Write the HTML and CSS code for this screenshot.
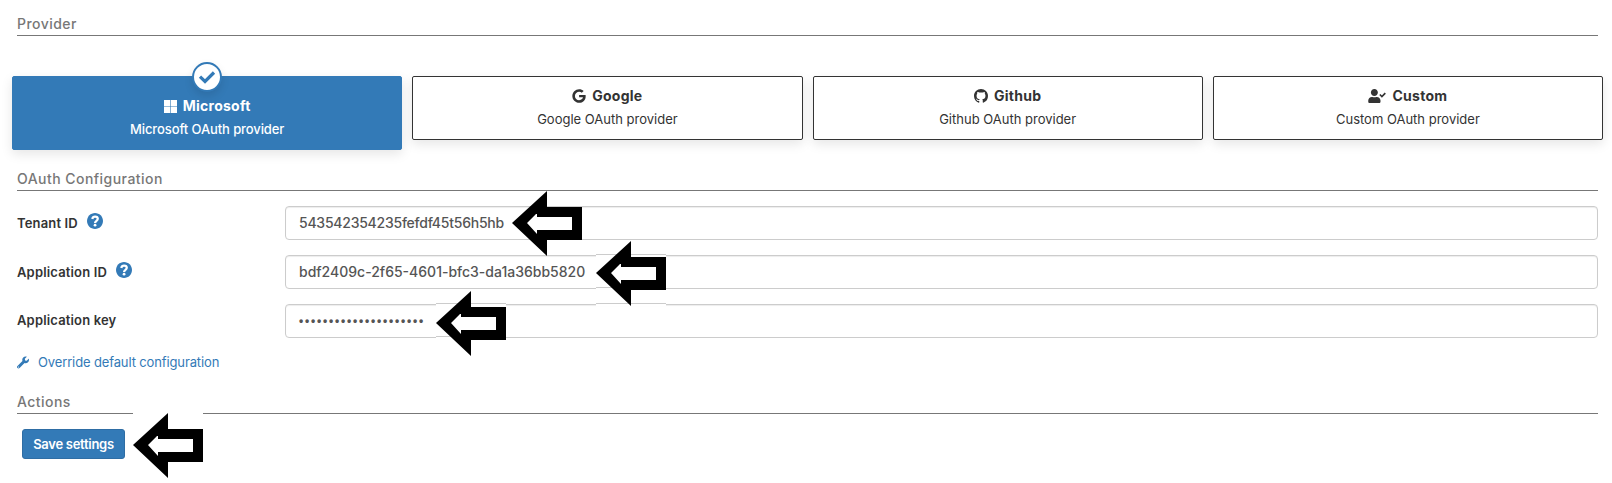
FILE: index.html
```html
<!DOCTYPE html>
<html lang="en">
<head>
<meta charset="utf-8">
<title>OAuth settings</title>
<link rel="stylesheet" href="styles.css">
</head>
<body>
<svg class="defs" width="0" height="0">
  <symbol id="help" viewBox="8 8 496 496"><path fill="currentColor" d="M504 256c0 137-111 248-248 248S8 393 8 256 119 8 256 8s248 111 248 248z"/><path fill="none" stroke="#fff" stroke-width="70" d="M172 192c10-48 42-72 86-72 50 0 84 30 84 70 0 62-84 58-84 126"/><circle cx="258" cy="386" r="43" fill="#fff"/></symbol>
  <symbol id="arrow" viewBox="0 0 70 65"><path fill="#000" d="M0 32 35 0V16H70V49H35V65Z"/><path fill="#fff" d="M15 32 24 23H25V26H60V39H25V43Z"/></symbol>
</svg>
<main class="page">
  <h2 class="section">Provider</h2>
  <div class="providers">
    <div class="card selected">
      <span class="check"><svg width="18" height="18" viewBox="0 0 18 18"><path d="M2 8.700 7 13.500 16 4.500" fill="none" stroke="currentColor" stroke-width="3.200"/></svg></span>
      <div class="title"><svg width="13" height="13" viewBox="0 0 13 13"><path fill="currentColor" d="M0 0h6.2v6.2H0zM6.8 0H13v6.2H6.8zM0 6.8h6.2V13H0zM6.8 6.8H13V13H6.8z"/></svg><span>Microsoft</span></div>
      <div class="sub">Microsoft OAuth provider</div>
    </div>
    <div class="card">
      <div class="title"><svg width="14" height="14" viewBox="0 0 488 512"><path fill="currentColor" d="M488 261.8C488 403.3 391.100 504 248 504 110.800 504 0 393.200 0 256S110.800 8 248 8c66.800 0 123 24.500 166.300 64.900l-67.500 64.900C258.500 52.600 94.300 116.600 94.300 256c0 86.500 69.100 156.600 153.700 156.600 98.200 0 135-70.400 140.800-106.900H248v-85.300h236.100c2.300 12.700 3.900 24.900 3.900 41.400z"/></svg><span>Google</span></div>
      <div class="sub">Google OAuth provider</div>
    </div>
    <div class="card">
      <div class="title"><svg width="14" height="14" viewBox="0 0 16 16"><path fill="currentColor" d="M8 0C3.580 0 0 3.580 0 8c0 3.540 2.290 6.530 5.470 7.590.4.070.550-.170.550-.380 0-.190-.010-.820-.010-1.490-2.010.370-2.530-.490-2.690-.940-.090-.230-.480-.940-.820-1.130-.280-.150-.680-.520-.010-.530.630-.010 1.080.580 1.230.820.720 1.210 1.870.870 2.330.660.070-.520.280-.870.510-1.070-1.780-.2-3.640-.890-3.640-3.950 0-.870.310-1.590.820-2.150-.080-.2-.360-1.020.080-2.120 0 0 .670-.210 2.200.820.640-.180 1.320-.270 2-.270s1.360.090 2 .270c1.530-1.040 2.200-.820 2.200-.820.440 1.100.160 1.920.080 2.120.510.560.820 1.270.820 2.150 0 3.070-1.870 3.750-3.650 3.950.290.250.540.730.540 1.480 0 1.070-.010 1.930-.010 2.200 0 .210.150.460.550.380A8.010 8.010 0 0 0 16 8c0-4.420-3.580-8-8-8z"/></svg><span>Github</span></div>
      <div class="sub">Github OAuth provider</div>
    </div>
    <div class="card">
      <div class="title"><svg width="18" height="14" viewBox="0 0 640 512"><path fill="currentColor" d="M224 256c70.700 0 128-57.300 128-128S294.700 0 224 0 96 57.300 96 128s57.300 128 128 128zm89.600 32h-16.700c-46 21-100 21-145.800 0h-16.700C60.200 288 0 348.200 0 422.400V464c0 26.500 21.500 48 48 48h352c26.500 0 48-21.500 48-48v-41.600c0-74.200-60.200-134.400-134.400-134.400z"/><path fill="none" stroke="currentColor" stroke-width="60" d="m424 200 75 76 125-127"/></svg><span>Custom</span></div>
      <div class="sub">Custom OAuth provider</div>
    </div>
  </div>

  <h2 class="section config">OAuth Configuration</h2>
  <div class="row">
    <label class="label">Tenant ID<svg class="help" width="16" height="16"><use href="#help"/></svg></label>
    <div class="field tenant">543542354235fefdf45t56h5hb</div>
  </div>
  <div class="row">
    <label class="label">Application ID<svg class="help" width="16" height="16"><use href="#help"/></svg></label>
    <div class="field">bdf2409c-2f65-4601-bfc3-da1a36bb5820</div>
  </div>
  <div class="row">
    <label class="label key">Application key</label>
    <div class="field secret">•••••••••••••••••••••</div>
  </div>
  <a class="override"><svg width="12" height="13" viewBox="0 0 512 512"><path fill="currentColor" d="M507.700 109.100c-2.200-9-13.500-12.100-20.100-5.500l-74.400 74.400-67.900-11.300L334 98.900l74.400-74.400c6.600-6.600 3.400-17.900-5.700-20.200-47.400-11.700-99.600.9-136.600 37.900-39.600 39.600-50.500 97.100-34.100 147.200L18.700 402.800c-25 25-25 65.500 0 90.500s65.500 25 90.500 0l213.200-213.200c50.100 16.700 107.500 5.700 147.400-34.200 37.100-37.100 49.700-89.300 37.900-136.800zM64 472a24 24 0 1 1 0-48 24 24 0 0 1 0 48z"/></svg><span>Override default configuration</span></a>
  <h2 class="section actions">Actions</h2>
  <button class="save">Save settings</button>
</main>

<svg class="note n1"><use href="#arrow"/></svg>
<svg class="note n2"><path class="patch" d="M0 0h70v65H0z"/><path class="edge" d="M0 13.500h70M0 46.500h70M0 62.500h70"/><use href="#arrow"/></svg>
<svg class="note n3"><path class="patch" d="M0 0h70v65H0z"/><path class="edge" d="M0 12.500h70M0 45.500h70"/><use href="#arrow"/></svg>
<svg class="note n4"><path class="patch" d="M0 0h70v65H0z"/><use href="#arrow"/></svg>
</body>
</html>
```
FILE: styles.css
```css
* { box-sizing: border-box; }
body {
  margin: 0;
  background: #fff;
  color: #333;
  font: 13px/18px Inter, "Open Sans", sans-serif;
}
svg { display: block; flex: none; }
.defs { position: absolute; }
.page { position: relative; width: 1612px; height: 483px; padding: 14px 14px 0 17px; overflow: hidden; }

.section {
  margin: 0;
  height: 22px;
  border-bottom: 1px solid #777;
  color: #777;
  font-size: 14px;
  font-weight: 500;
  line-height: 20px;
  letter-spacing: .46px;
}
.section.config { margin-top: 19px; }

.providers {
  display: grid;
  grid-template-columns: repeat(4, 1fr);
  align-items: start;
  gap: 10px;
  margin: 40px -5px 0;
}
.card {
  position: relative;
  height: 64px;
  padding: 10px 0 0;
  border: 1px solid #333;
  border-radius: 2px;
  background: #fff;
  box-shadow: 0 4px 12px rgba(0, 0, 0, .1);
  text-align: center;
}
.card.selected {
  height: 74px;
  padding-top: 20px;
  border-color: #337ab7;
  background: #337ab7;
  color: #fff;
}
.title {
  display: flex;
  justify-content: center;
  align-items: center;
  gap: 6px;
  height: 18px;
  font-size: 14px;
  font-weight: 700;
  letter-spacing: .25px;
}
.sub { margin-top: 5px; }
.selected .sub { font-weight: 500; letter-spacing: -.1px; }
.check {
  position: absolute;
  left: 50%;
  top: -15px;
  display: flex;
  align-items: center;
  justify-content: center;
  width: 30px;
  height: 30px;
  margin-left: -15px;
  border: 2px solid #337ab7;
  border-radius: 50%;
  background: #fff;
  color: #337ab7;
  box-shadow: 0 4px 8px rgba(0, 0, 0, .1);
}

.row { display: flex; height: 34px; margin-top: 15px; }
.label {
  display: flex;
  width: 268px;
  padding-top: 8px;
  font-weight: 600;
  letter-spacing: .16px;
}
.label.key { padding-top: 7px; }
.help { margin: -1px 0 0 9px; color: #337ab7; }
.field {
  width: 1313px;
  padding: 6px 13px;
  border: 1px solid #ccc;
  border-radius: 4px;
  box-shadow: inset 0 1px 1px rgba(0, 0, 0, .075);
  color: #555;
  font-size: 14px;
  font-weight: 500;
  line-height: 20px;
}
.tenant { letter-spacing: -.24px; }
.secret { font: 700 12px/21px "Liberation Sans", sans-serif; letter-spacing: 1.8px; }

.override {
  display: flex;
  align-items: center;
  gap: 9px;
  height: 18px;
  margin-top: 15px;
  color: #337ab7;
  letter-spacing: -.13px;
}
.section.actions { margin-top: 21px; }
.save {
  display: block;
  width: 103px;
  height: 30px;
  margin: 15px 0 0 5px;
  padding: 0 0 1px;
  border: 1px solid #2e6da4;
  border-radius: 3px;
  background: #337ab7;
  color: #fff;
  font: 600 13px/18px Inter, "Open Sans", sans-serif;
  letter-spacing: -.28px;
}

/* Annotation arrows lie over the form */
.note { position: absolute; width: 70px; height: 65px; }
.n1 { left: 512px; top: 191px; }
.n2 { left: 596px; top: 241px; }
.n3 { left: 436px; top: 291px; }
.n4 { left: 133px; top: 413px; }
.patch { fill: #fff; }
.edge { stroke: #ccc; }
```
